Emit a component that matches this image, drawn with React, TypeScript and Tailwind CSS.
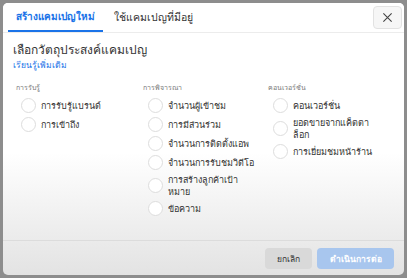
import React from 'react';

const FONT = '"Noto Sans", "DejaVu Sans", "Liberation Sans", sans-serif';

interface Column {
  title: string;
  items: string[];
}

// '\n' marks where the label wraps in the original
const columns: Column[] = [
  { title: 'การรับรู้', items: ['การรับรู้แบรนด์', 'การเข้าถึง'] },
  {
    title: 'การพิจารณา',
    items: ['จำนวนผู้เข้าชม', 'การมีส่วนร่วม', 'จำนวนการติดตั้งแอพ', 'จำนวนการรับชมวิดีโอ', 'การสร้างลูกค้าเป้า\nหมาย', 'ข้อความ'],
  },
  { title: 'คอนเวอร์ชั่น', items: ['คอนเวอร์ชั่น', 'ยอดขายจากแค็ตตา\nล็อก', 'การเยี่ยมชมหน้าร้าน'] },
];

const Radio: React.FC<{ label: string }> = ({ label }) => {
  const wrapped = label.includes('\n');
  return (
    <div className={wrapped ? 'flex h-[27px] items-center gap-[5px]' : 'flex h-[19px] items-center gap-[5px]'}>
      <span className="h-[15px] w-[15px] shrink-0 rounded-full border border-[#dddddd] bg-white" />
      <span className="whitespace-pre-line text-[9px] leading-[12px] text-[#333]">{label}</span>
    </div>
  );
};

const App: React.FC = () => {
  return (
    <div className="h-[278px] w-[407px] overflow-hidden bg-[#8d8d8d] p-[3px]" style={{ fontFamily: FONT }}>
      <div className="flex h-full flex-col overflow-hidden rounded-[5px] bg-gradient-to-b from-white from-55% to-[#e3e3e3]">
        {/* tabs */}
        <div className="flex h-[30px] shrink-0 items-stretch border-b border-[#ececec] bg-white pl-[5px] pr-[2px]">
          <div className="flex items-center border-b-2 border-[#1a73e8] px-[8px] text-[10px] font-semibold text-[#1a73e8]">
            สร้างแคมเปญใหม่
          </div>
          <div className="flex items-center px-[11px] text-[10.5px] text-[#333]">ใช้แคมเปญที่มีอยู่</div>
          <div className="ml-auto flex items-center">
            <button className="flex h-[23px] w-[29px] items-center justify-center rounded-[4px] border border-[#e2e2e2] bg-[#f6f6f6] text-[#444]">
              <svg width="11" height="11" viewBox="0 0 12 12" stroke="currentColor" strokeWidth="1.2" fill="none">
                <path d="M1.5 1.5l9 9M10.5 1.5l-9 9" />
              </svg>
            </button>
          </div>
        </div>

        {/* body */}
        <div className="flex-1 px-[10px] pt-[8px]">
          <h1 className="text-[12px] leading-[18px] text-[#333]">เลือกวัตถุประสงค์แคมเปญ</h1>
          <a className="block text-[8.5px] leading-[11px] text-[#1a73e8]">เรียนรู้เพิ่มเติม</a>

          <div className="mt-[13px] grid grid-cols-[127px_125px_1fr]">
            {columns.map(col => (
              <div key={col.title} className="pl-[3px]">
                <p className="text-[7px] leading-[10px] text-[#777]">{col.title}</p>
                <div className="mt-[3px] flex flex-col pl-[5px]">
                  {col.items.map(item => (
                    <Radio key={item} label={item} />
                  ))}
                </div>
              </div>
            ))}
          </div>
        </div>

        {/* footer */}
        <div className="flex shrink-0 items-center justify-end gap-[5px] border-t border-[#dcdcdc] px-[10px] pt-[7px] pb-[6px]">
          <button className="h-[21px] w-[47px] rounded-[4px] bg-[#d9d9d9] text-[8.5px] leading-[21px] text-[#333]">ยกเลิก</button>
          <button className="h-[21px] w-[77px] rounded-[4px] bg-[#a8c6ee] text-[8.5px] font-semibold leading-[21px] text-white">
            ดำเนินการต่อ
          </button>
        </div>
      </div>
    </div>
  );
};

export default App;
